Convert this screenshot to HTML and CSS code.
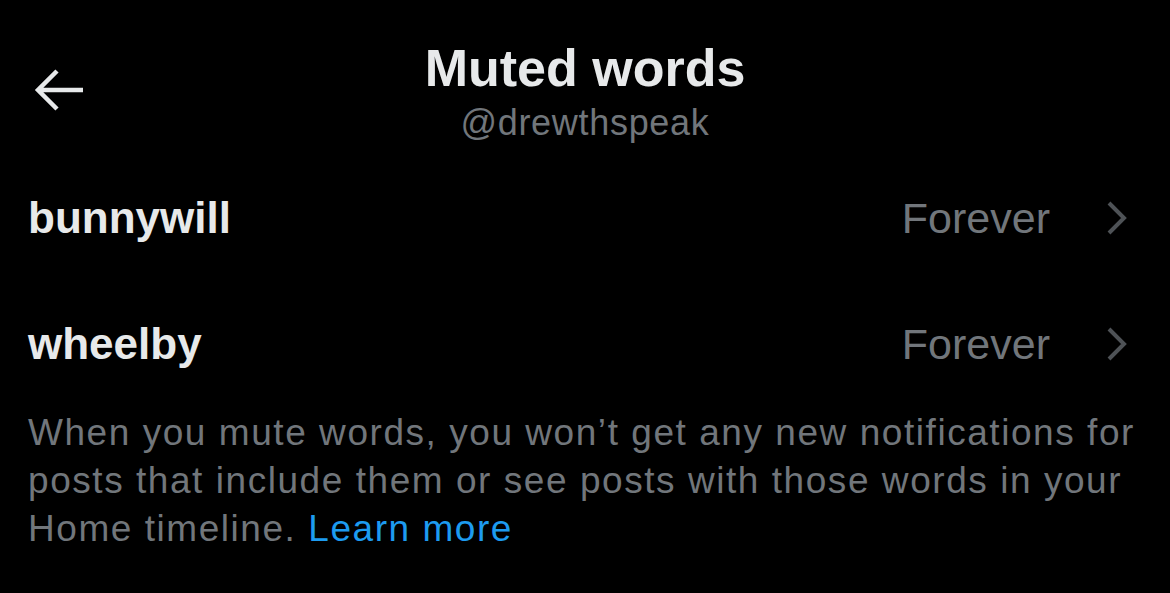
FILE: index.html
```html
<!DOCTYPE html>
<html lang="en">
<head>
    <meta charset="UTF-8">
    <meta name="viewport" content="width=device-width, initial-scale=1.0">
    <title>Muted words</title>
    <link rel="stylesheet" href="styles.css">
</head>

<body>
    <div class="screen">
        <header class="top-bar">
            <button class="back-btn" aria-label="Back">
                <svg viewBox="0 0 52 46" width="52" height="46">
                    <path d="M50 23H5M24 4L5 23l19 19" fill="none" stroke="#e7e9ea" stroke-width="4.5"/>
                </svg>
            </button>
            <div class="title-block">
                <h1>Muted words</h1>
                <div class="handle">@drewthspeak</div>
            </div>
            <div></div>
        </header>

        <ul class="word-list">
            <li class="word-row">
                <span class="word">bunnywill</span>
                <span class="duration">Forever</span>
                <svg class="chevron" viewBox="0 0 22 36" width="22" height="36">
                    <path d="M3 3l15 15L3 33" fill="none" stroke="#4e5256" stroke-width="4"/>
                </svg>
            </li>
            <li class="word-row">
                <span class="word">wheelby</span>
                <span class="duration">Forever</span>
                <svg class="chevron" viewBox="0 0 22 36" width="22" height="36">
                    <path d="M3 3l15 15L3 33" fill="none" stroke="#4e5256" stroke-width="4"/>
                </svg>
            </li>
        </ul>

        <p class="note">When you mute words, you won’t get any new notifications for posts that include them or see posts with those words in your Home timeline. <a href="#">Learn more</a></p>
    </div>
</body>

</html>
```

FILE: styles.css
```css
/* Basic reset */
* {
    margin: 0;
    padding: 0;
    box-sizing: border-box;
}

body {
    font-family: 'Liberation Sans', Arial, sans-serif;
    background: #000000;
    color: #e7e9ea;
    width: 1170px;
    height: 593px;
    overflow: hidden;
}

.screen {
    padding: 0 28px;
}

.top-bar {
    display: grid;
    grid-template-columns: 1fr auto 1fr;
    align-items: start;
    padding-top: 38px;
    height: 155px;
}

.back-btn {
    background: none;
    border: none;
    margin-top: 29px;
    margin-left: 5px;
    width: 52px;
    height: 46px;
}

.back-btn svg {
    display: block;
}

.title-block {
    text-align: center;
}

h1 {
    font-size: 52px;
    font-weight: bold;
    line-height: 60px;
    color: #e7e9ea;
}

.handle {
    font-size: 36px;
    letter-spacing: 0.7px;
    line-height: 50px;
    color: #71767b;
}

.word-list {
    list-style: none;
}

.word-row {
    display: flex;
    align-items: center;
    height: 126px;
}

.word {
    flex: 1;
    font-size: 44px;
    font-weight: bold;
    color: #e7e9ea;
}

.duration {
    font-size: 43px;
    color: #71767b;
    margin-right: 56px;
}

.chevron {
    margin-right: 14px;
}

.note {
    margin-top: 2px;
    font-size: 37px;
    letter-spacing: 1.55px;
    line-height: 48px;
    color: #71767b;
}

.note a {
    color: #1d9bf0;
    text-decoration: none;
}
```
